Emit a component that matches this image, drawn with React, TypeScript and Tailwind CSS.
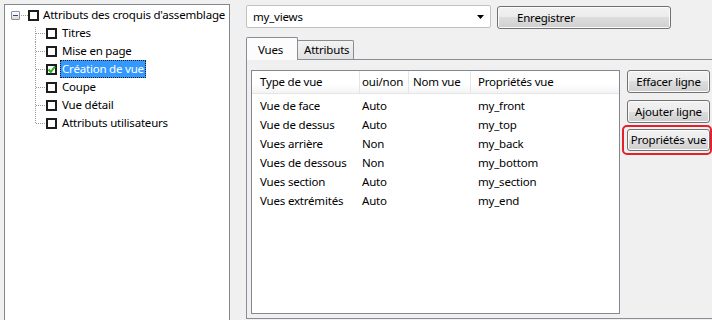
import React from 'react';

const rows = [
  ['Vue de face', 'Auto', '', 'my_front'],
  ['Vue de dessus', 'Auto', '', 'my_top'],
  ['Vues arrière', 'Non', '', 'my_back'],
  ['Vues de dessous', 'Non', '', 'my_bottom'],
  ['Vues section', 'Auto', '', 'my_section'],
  ['Vues extrémités', 'Auto', '', 'my_end'],
];

const children = ['Titres', 'Mise en page', 'Création de vue', 'Coupe', 'Vue détail', 'Attributs utilisateurs'];

const btn =
  'whitespace-nowrap border border-[#707070] rounded-[3px] bg-[linear-gradient(to_bottom,#f2f2f2_0%,#ebebeb_50%,#dddddd_50%,#cfcfcf_100%)] shadow-[inset_0_0_0_1px_#fbfbfb] text-black';

function Check({ checked }: { checked?: boolean }) {
  return (
    <div className="relative w-[11px] h-[11px] shrink-0 border-2 border-[#1c1c1c] bg-white">
      {checked && (
        <svg className="absolute -left-[2px] -top-[2px]" width="11" height="11" viewBox="0 0 11 11">
          <path d="M2.5 5.5 L4.8 8 L9 2.5" fill="none" stroke="#1fb51f" strokeWidth="2" />
        </svg>
      )}
    </div>
  );
}

function Connector({ first, last }: { first: boolean; last: boolean }) {
  return (
    <svg width="10" height="18" className="shrink-0" shapeRendering="crispEdges">
      <line x1="0.5" y1={first ? 3 : 0} x2="0.5" y2={last ? 9 : 18} stroke="#9a9a9a" strokeDasharray="1 1" />
      <line x1="1" y1="9.5" x2="10" y2="9.5" stroke="#9a9a9a" strokeDasharray="1 1" />
    </svg>
  );
}

export default function App() {
  return (
    <div className="w-[712px] h-[320px] overflow-hidden bg-[#f0f0f0] flex font-['Noto_Sans',sans-serif] text-[11.5px] tracking-[-0.2px] text-black">
      {/* Tree */}
      <div className="ml-[4px] mt-[4px] w-[226px] h-[330px] shrink-0 border border-[#828790] bg-white pt-[1px]">
        <div className="h-[18px] flex items-center pl-[6px]">
          <div className="w-[9px] h-[9px] shrink-0 border border-[#919191] rounded-[1px] bg-[linear-gradient(to_bottom,#ffffff,#dcdcdc)] flex items-center justify-center">
            <div className="w-[5px] h-[1px] bg-[#1f4c94]" />
          </div>
          <svg width="8" height="18" className="shrink-0" shapeRendering="crispEdges">
            <line x1="1" y1="9.5" x2="8" y2="9.5" stroke="#9a9a9a" strokeDasharray="1 1" />
          </svg>
          <Check />
          <span className="ml-[2px] px-[2px] leading-[18px] whitespace-nowrap">Attributs des croquis d'assemblage</span>
        </div>
        {children.map((c, i) => (
          <div key={c} className="h-[18px] flex items-center pl-[30px]">
            <Connector first={i === 0} last={i === children.length - 1} />
            <div className="ml-[1px]">
              <Check checked={i === 2} />
            </div>
            <span
              className={
                'ml-[3px] px-[2px] h-[18px] leading-[18px] whitespace-nowrap ' +
                (i === 2 ? 'bg-[#3399ff] text-white outline-1 outline-dotted outline-[#1a1a1a] -outline-offset-1' : '')
              }
            >
              {c}
            </span>
          </div>
        ))}
      </div>

      {/* Right side */}
      <div className="ml-[16px] flex flex-col">
        <div className="mt-[5px] flex items-start">
          <div className="w-[245px] h-[23px] border border-[#c2c2c2] rounded-[2px] bg-white flex items-center pl-[6px] pr-[6px]">
            <span className="flex-1">my_views</span>
            <svg width="7" height="4" viewBox="0 0 7 4">
              <polygon points="0,0 7,0 3.5,4" fill="#000" />
            </svg>
          </div>
          <button className={'ml-[6px] mt-[1px] w-[174px] h-[23px] text-left pl-[19px] ' + btn}>Enregistrer</button>
        </div>

        {/* Tabs */}
        <div className="mt-[8px] flex items-end">
          <div className="relative z-10 -mb-px w-[52px] h-[23px] border border-b-0 border-[#898c95] rounded-t-[2px] bg-[#fcfcfc] pl-[11px] pt-[3px]">
            Vues
          </div>
          <div className="-ml-px w-[57px] h-[19px] border border-b-0 border-[#898c95] rounded-t-[2px] bg-[linear-gradient(to_bottom,#f3f3f3,#e2e2e2)] pl-[6px] leading-[18px]">
            Attributs
          </div>
        </div>

        <div className="w-[500px] h-[260px] border border-[#898c95] bg-[#f0f0f0] flex items-start pl-[4px] pt-[10px]">
          {/* List view */}
          <div className="w-[369px] h-[244px] border border-[#828790] bg-white">
            <div className="h-[23px] flex border-b border-[#e5e5e5] bg-[linear-gradient(to_bottom,#ffffff_0%,#ffffff_60%,#f4f4f4_100%)]">
              <div className="w-[108px] shrink-0 border-r border-[#e5e5e5] pl-[8px] flex items-center">Type de vue</div>
              <div className="w-[49px] shrink-0 border-r border-[#e5e5e5] pl-[2px] flex items-center whitespace-nowrap overflow-hidden">oui/non</div>
              <div className="w-[62px] shrink-0 border-r border-[#e5e5e5] pl-[4px] flex items-center whitespace-nowrap">Nom vue</div>
              <div className="flex-1 pl-[7px] flex items-center whitespace-nowrap">Propriétés vue</div>
            </div>
            <div className="mt-[2px]">
              {rows.map((r) => (
                <div key={r[0]} className="h-[19px] flex items-center whitespace-nowrap">
                  <div className="w-[108px] shrink-0 pl-[8px]">{r[0]}</div>
                  <div className="w-[49px] shrink-0 pl-[2px]">{r[1]}</div>
                  <div className="w-[62px] shrink-0 pl-[4px]">{r[2]}</div>
                  <div className="flex-1 pl-[7px]">{r[3]}</div>
                </div>
              ))}
            </div>
          </div>

          {/* Buttons */}
          <div className="ml-[7px] w-[83px] flex flex-col">
            <button className={'h-[23px] ' + btn}>Effacer ligne</button>
            <button className={'mt-[7px] h-[23px] ' + btn}>Ajouter ligne</button>
            <div className="relative mt-[6px]">
              <button className={'w-full h-[22px] ' + btn}>Propriétés vue</button>
              <div className="absolute -left-[5px] -right-[2px] -top-[4px] -bottom-[4px] border-2 border-[#e3202c] rounded-[5px] pointer-events-none" />
            </div>
          </div>
        </div>
      </div>
    </div>
  );
}
